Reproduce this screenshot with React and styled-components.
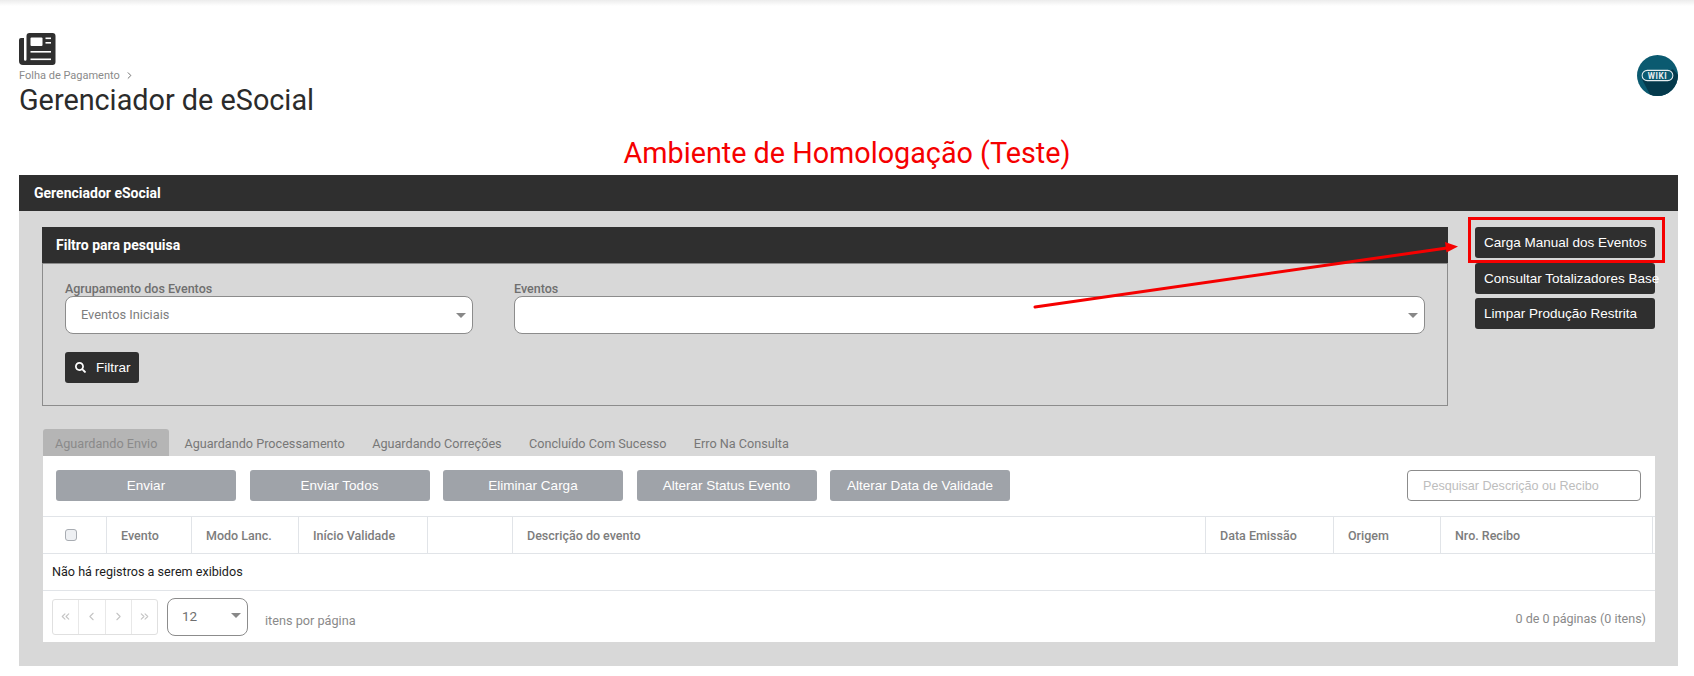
import styled, { createGlobalStyle } from 'styled-components';
import { FaSearch } from 'react-icons/fa';
import { ChevronRight, ChevronLeft, ChevronsLeft, ChevronsRight } from 'lucide-react';

const actions = ['Enviar', 'Enviar Todos', 'Eliminar Carga', 'Alterar Status Evento', 'Alterar Data de Validade'];
const tabs = ['Aguardando Envio', 'Aguardando Processamento', 'Aguardando Correções', 'Concluído Com Sucesso', 'Erro Na Consulta'];
const columns = ['', 'Evento', 'Modo Lanc.', 'Início Validade', '', 'Descrição do evento', 'Data Emissão', 'Origem', 'Nro. Recibo'];

export default function App() {
  return (
    <Page>
      <GlobalStyle />
      <TopShadow />
      <Header>
        <div>
          <PageIcon viewBox="0 0 37 32" aria-hidden="true">
            <path
              d="M7.5 3a3 3 0 0 1 3-3h23a3 3 0 0 1 3 3v26a3 3 0 0 1-3 3H4a4 4 0 0 1-4-4V7a2 2 0 0 1 2-2h3v21.5a1.2 1.2 0 0 0 2.5 0Z"
              fill="#2f2f2f"
            />
            <rect x="11.5" y="4.5" width="12" height="8.5" rx="1" fill="#fff" />
            <rect x="26.5" y="4.5" width="5.5" height="1.6" fill="#fff" />
            <rect x="26.5" y="9" width="5.5" height="1.6" fill="#fff" />
            <rect x="11.5" y="18" width="20.5" height="1.6" fill="#fff" />
            <rect x="11.5" y="25.5" width="20.5" height="1.6" fill="#fff" />
          </PageIcon>
          <Breadcrumb>
            Folha de Pagamento
            <ChevronRight size={11} />
          </Breadcrumb>
          <Title>Gerenciador de eSocial</Title>
        </div>
        <Wiki viewBox="0 0 40 40" aria-label="Wiki">
          <defs>
            <clipPath id="wikiClip">
              <circle cx="20" cy="20" r="20" />
            </clipPath>
          </defs>
          <circle cx="20" cy="20" r="20" fill="#0b5a70" />
          <path d="M5 24 L35 14 L60 40 L24 60 Z" fill="#053a4c" clipPath="url(#wikiClip)" />
          <rect x="5" y="15" width="30" height="10" rx="5" fill="#0b5a70" stroke="#e8eef0" strokeWidth="1" />
          <text x="20" y="23" textAnchor="middle" fontFamily="Roboto, sans-serif" fontWeight="700" fontSize="8" letterSpacing="0.6" fill="#e8eef0">WIKI</text>
        </Wiki>
      </Header>
      <Environment>Ambiente de Homologação (Teste)</Environment>

      <Panel>
        <PanelTitle>Gerenciador eSocial</PanelTitle>
        <PanelBody>
          <TopRow>
            <Filter>
              <FilterTitle>Filtro para pesquisa</FilterTitle>
              <FilterBody>
                <Fields>
                  <div>
                    <FieldLabel>Agrupamento dos Eventos</FieldLabel>
                    <SelectBox>Eventos Iniciais<Caret $top={16} /></SelectBox>
                  </div>
                  <div>
                    <FieldLabel>Eventos</FieldLabel>
                    <SelectBox><Caret $top={16} /></SelectBox>
                  </div>
                </Fields>
                <FilterButton><FaSearch size={11} />Filtrar</FilterButton>
              </FilterBody>
            </Filter>
            <SideButtons>
              <SideButton>
                Carga Manual dos Eventos
                <Highlight />
              </SideButton>
              <SideButton>Consultar Totalizadores Base</SideButton>
              <SideButton>Limpar Produção Restrita</SideButton>
            </SideButtons>
          </TopRow>

          <Tabs>
            {tabs.map((t, i) => (
              <Tab key={t} $active={i === 0}>{t}</Tab>
            ))}
          </Tabs>
          <TabPanel>
            <Toolbar>
              {actions.map((a) => (
                <ActionButton key={a}>{a}</ActionButton>
              ))}
              <SearchInput placeholder="Pesquisar Descrição ou Recibo" />
            </Toolbar>
            <GridHead>
              {columns.map((c, i) => (
                <HeadCell key={i}>
                  {i === 0 ? <CheckBox /> : c}
                </HeadCell>
              ))}
            </GridHead>
            <EmptyRow>Não há registros a serem exibidos</EmptyRow>
            <Pagination>
              <Pager>
                <PagerCell><ChevronsLeft size={13} /></PagerCell>
                <PagerCell><ChevronLeft size={13} /></PagerCell>
                <PagerCell><ChevronRight size={13} /></PagerCell>
                <PagerCell><ChevronsRight size={13} /></PagerCell>
              </Pager>
              <PageSize>12<Caret $top={14} /></PageSize>
              <PerPage>itens por página</PerPage>
              <PageInfo>0 de 0 páginas (0 itens)</PageInfo>
            </Pagination>
          </TabPanel>
        </PanelBody>
      </Panel>

      <Arrow viewBox="0 0 430 70" aria-hidden="true">
        <line x1="2" y1="67" x2="414" y2="8" stroke="#f50000" strokeWidth="3" strokeLinecap="round" />
        <polygon points="425,6.5 412,2 413.5,12.5" fill="#f50000" />
      </Arrow>
    </Page>
  );
}

const GlobalStyle = createGlobalStyle`
  body {
    margin: 0;
    background: #fff;
    font-family: Roboto, "Liberation Sans", sans-serif;
  }
`;

const Page = styled.div`
  position: relative;
  width: 1694px;
  height: 676px;
  overflow: hidden;
`;

const TopShadow = styled.div`
  height: 6px;
  background: linear-gradient(#ececec, #fff);
`;

const Header = styled.header`
  display: flex;
  justify-content: space-between;
  align-items: flex-start;
  height: 120px;
  padding: 27px 16px 0 19px;
  box-sizing: border-box;
`;

const PageIcon = styled.svg`
  display: block;
  width: 37px;
  height: 32px;
`;

const Breadcrumb = styled.div`
  display: flex;
  align-items: center;
  gap: 4px;
  margin-top: 4px;
  font-size: 11px;
  line-height: 13px;
  color: #8a8a8a;
  svg {
    color: #666;
  }
`;

const Title = styled.h1`
  margin: 0;
  font-size: 28.8px;
  line-height: 36px;
  font-weight: 400;
  color: #2b2b2b;
`;

const Wiki = styled.svg`
  width: 41px;
  height: 41px;
  margin-top: 22px;
`;

const Environment = styled.div`
  margin: 9px 0 4px;
  text-align: center;
  font-size: 28.75px;
  line-height: 36px;
  color: #f50000;
`;

const Panel = styled.section`
  margin: 0 16px 0 19px;
  background: #d8d8d8;
`;

const PanelTitle = styled.div`
  height: 36px;
  padding-left: 15px;
  background: #2f2f2f;
  color: #fff;
  font-size: 14px;
  font-weight: 700;
  line-height: 36px;
`;

const PanelBody = styled.div`
  padding: 16px 23px 24px 24px;
`;

const TopRow = styled.div`
  display: flex;
  gap: 27px;
  align-items: flex-start;
`;

const Filter = styled.div`
  width: 1406px;
  margin-left: -1px;
`;

const FilterTitle = styled.div`
  height: 36px;
  padding-left: 14px;
  background: #2f2f2f;
  color: #fff;
  font-size: 14px;
  font-weight: 700;
  line-height: 36px;
`;

const FilterBody = styled.div`
  height: 143px;
  padding: 17px 22px 0;
  box-sizing: border-box;
  border: 1px solid #8c8c8c;
`;

const Fields = styled.div`
  display: grid;
  grid-template-columns: 408px 911px;
  gap: 41px;
`;

const FieldLabel = styled.div`
  font-size: 12.5px;
  font-weight: 500;
  line-height: 15px;
  color: #6f6f6f;
`;

const SelectBox = styled.div`
  position: relative;
  height: 38px;
  padding-left: 15px;
  box-sizing: border-box;
  background: #fff;
  border: 1px solid #8c8c8c;
  border-radius: 8px;
  font-size: 12.8px;
  line-height: 36px;
  color: #7d7d7d;
`;

const Caret = styled.span`
  position: absolute;
  top: ${(p) => p.$top}px;
  right: 6px;
  width: 0;
  height: 0;
  border-left: 5px solid transparent;
  border-right: 5px solid transparent;
  border-top: 5px solid #888;
`;

const FilterButton = styled.button`
  display: flex;
  align-items: center;
  gap: 10px;
  width: 74px;
  height: 31px;
  margin-top: 18px;
  padding: 0 0 0 10px;
  background: #2f2f2f;
  border: 0;
  border-radius: 3px;
  color: #fff;
  font-family: "Liberation Sans", sans-serif;
  font-size: 13.5px;
`;

const SideButtons = styled.div`
  display: flex;
  flex-direction: column;
  gap: 4.5px;
  width: 180px;
`;

const SideButton = styled.button`
  position: relative;
  height: 31px;
  padding: 0 0 0 9px;
  background: #2f2f2f;
  border: 0;
  border-radius: 3px;
  color: #fff;
  font-family: "Liberation Sans", sans-serif;
  font-size: 13.5px;
  text-align: left;
  white-space: nowrap;
`;

const Highlight = styled.span`
  position: absolute;
  inset: -10px -10px -5px -7px;
  border: 3px solid #f50000;
`;

const Arrow = styled.svg`
  position: absolute;
  left: 1033px;
  top: 240px;
  width: 430px;
  height: 70px;
`;

const Tabs = styled.div`
  display: flex;
  margin-top: 23px;
`;

const Tab = styled.div`
  height: 27px;
  padding: 0 12px;
  background: ${(p) => (p.$active ? '#b5b5b5' : 'transparent')};
  border-radius: 3px 3px 0 0;
  font-size: 12.65px;
  line-height: 30px;
  color: ${(p) => (p.$active ? '#8a8a8a' : '#777')};
  margin-right: ${(p) => (p.$active ? '3px' : '3.4px')};
`;

const TabPanel = styled.div`
  background: #fff;
`;

const Toolbar = styled.div`
  display: flex;
  gap: 13.5px;
  padding: 14px 14px 15px 13px;
`;

const ActionButton = styled.button`
  width: 180px;
  height: 31px;
  background: #9fa3a9;
  border: 0;
  border-radius: 3px;
  color: #fff;
  font-family: "Liberation Sans", sans-serif;
  font-size: 13.5px;
`;

const SearchInput = styled.input`
  width: 234px;
  height: 31px;
  margin-left: auto;
  padding: 0 15px;
  box-sizing: border-box;
  border: 1px solid #8c8c8c;
  border-radius: 4px;
  font-family: "Liberation Sans", sans-serif;
  font-size: 12.6px;
  &::placeholder {
    color: #bdbdbd;
  }
`;

const GridHead = styled.div`
  display: grid;
  grid-template-columns: 63px 85px 107px 129px 85px 693px 128px 107px 213px;
  height: 38px;
  box-sizing: border-box;
  border: solid #e1e4e8;
  border-width: 1px 0 1px 0;
`;

const HeadCell = styled.div`
  display: flex;
  align-items: center;
  padding-left: 14px;
  border-left: 1px solid #e1e4e8;
  font-size: 12.5px;
  font-weight: 500;
  color: #7d7d7d;
  &:first-child {
    padding-left: 22px;
    border-left: 0;
  }
  &:last-child {
    border-right: 1px solid #e1e4e8;
  }
`;

const CheckBox = styled.span`
  width: 10px;
  height: 10px;
  background: #eef0f3;
  border: 1px solid #a8acb2;
  border-radius: 3px;
`;

const EmptyRow = styled.div`
  height: 37px;
  padding-left: 9px;
  box-sizing: border-box;
  border-bottom: 1px solid #e1e4e8;
  font-size: 12.6px;
  line-height: 36px;
  color: #1c1c1c;
`;

const Pagination = styled.div`
  display: flex;
  align-items: center;
  height: 51px;
  padding: 0 9px;
  box-sizing: border-box;
`;

const Pager = styled.div`
  display: flex;
  width: 106px;
  height: 36px;
  box-sizing: border-box;
  border: 1px solid #e0e0e0;
  border-radius: 3px;
`;

const PagerCell = styled.span`
  flex: 1;
  display: flex;
  align-items: center;
  justify-content: center;
  color: #c4c4c4;
  & + & {
    border-left: 1px solid #e8e8e8;
  }
`;

const PageSize = styled.div`
  position: relative;
  width: 81px;
  height: 38px;
  margin-left: 9px;
  padding-left: 14px;
  box-sizing: border-box;
  border: 1px solid #8c8c8c;
  border-radius: 8px;
  font-size: 13.5px;
  line-height: 34px;
  color: #6f6f6f;
`;

const PerPage = styled.span`
  margin: 7px 0 0 17px;
  font-size: 12.7px;
  color: #8a8a8a;
`;

const PageInfo = styled.span`
  margin: 3px 0 0 auto;
  font-size: 12.55px;
  color: #8a8a8a;
`;
